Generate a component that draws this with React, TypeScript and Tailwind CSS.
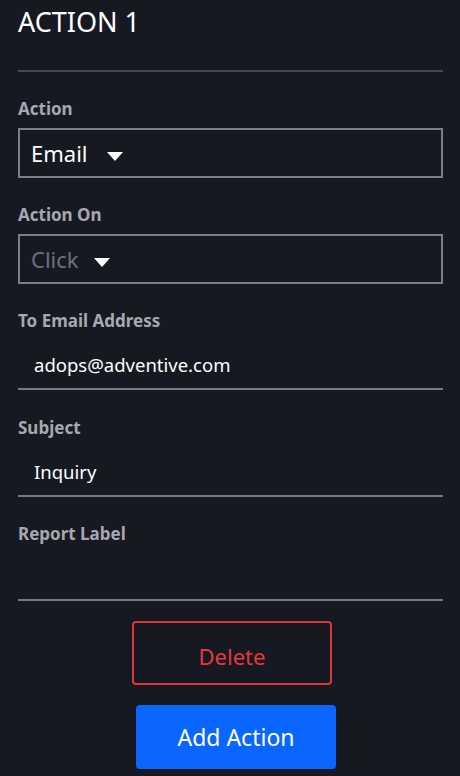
import React from "react";

const Caret = () => (
  <svg width="16" height="9" viewBox="0 0 16 9" className="shrink-0">
    <path d="M0 0 L16 0 L8 9 Z" fill="#ffffff" />
  </svg>
);

const Label = ({ children }: { children: React.ReactNode }) => (
  <div className="text-[17px] font-bold leading-[24px] text-[#a7a8ae] mb-[7px]">{children}</div>
);

const Select = ({ value, placeholder }: { value: string; placeholder?: boolean }) => (
  <div className="h-[50px] border-2 border-[#7b7d88] flex items-start pl-[11px] pt-[8px] mb-[25px]">
    <span className={`text-[22px] leading-[30px] ${placeholder ? "text-[#6d6f76]" : "text-white"}`}>{value}</span>
    <span className={`${placeholder ? "ml-[15px]" : "ml-[19px]"} mt-[14px]`}>
      <Caret />
    </span>
  </div>
);

export default function App() {
  return (
    <div
      className="min-h-screen w-full bg-[#171922] pl-[18px] pr-[17px]"
      style={{ fontFamily: '"Noto Sans", "Open Sans", sans-serif' }}
    >
      <div className="pt-[1px] text-[27px] leading-[42px] text-white">ACTION 1</div>
      <div className="mt-[27px] h-[2px] bg-[#454852] mb-[25px]" />

      <Label>Action</Label>
      <Select value="Email" />

      <Label>Action On</Label>
      <Select value="Click" placeholder />

      <Label>To Email Address</Label>
      <div className="mb-[26px]">
        <div className="h-[50px] border-b-2 border-[#777a85] pl-[16px] pt-[12px]">
          <span className="text-[18.5px] leading-[26px] text-white">adops@adventive.com</span>
        </div>
      </div>

      <Label>Subject</Label>
      <div className="mb-[25px]">
        <div className="h-[50px] border-b-2 border-[#777a85] pl-[16px] pt-[12px]">
          <span className="text-[18.5px] leading-[26px] text-white">Inquiry</span>
        </div>
      </div>

      <Label>Report Label</Label>
      <div className="h-[48px] border-b-2 border-[#777a85]" />

      <div className="mt-[20px] flex flex-col">
        <button className="ml-[114px] w-[200px] h-[64px] border-2 border-[#e0343b] rounded-[4px] flex items-center justify-center pt-[7px] text-[22px] text-[#e5383f] bg-transparent">
          Delete
        </button>
        <button className="mt-[20px] ml-[118px] w-[200px] h-[64px] rounded-[4px] bg-[#0a66ff] flex items-center justify-center text-[23px] text-white">
          Add Action
        </button>
      </div>
      <div className="h-[7px]" />
    </div>
  );
}
